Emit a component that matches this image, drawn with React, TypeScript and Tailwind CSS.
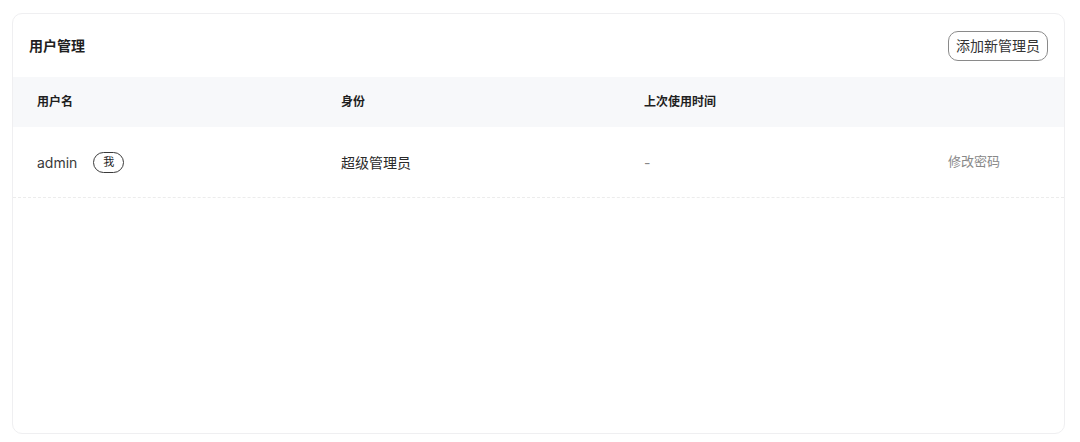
import React from 'react';

interface AdminUser {
  username: string;
  isMe: boolean;
  role: string;
  lastUsed: string;
}

const users: AdminUser[] = [
  { username: 'admin', isMe: true, role: '超级管理员', lastUsed: '-' },
];

const columns = ['用户名', '身份', '上次使用时间', ''];

export default function App() {
  return (
    <div
      className="w-[1080px] h-[442px] bg-white pt-[13px] pl-[12px] pr-[15px] pb-[8px]"
      style={{ fontFamily: 'Inter, "Noto Sans CJK SC", sans-serif' }}
    >
      <div className="h-full rounded-[10px] border border-[#efeff1] bg-white overflow-hidden flex flex-col">
        {/* Header */}
        <div className="h-[63px] flex items-center justify-between pl-[16px] pr-[16px]">
          <h2 className="text-[14px] font-bold text-[#1f1f1f]">用户管理</h2>
          <button className="h-[30px] px-[7px] rounded-[10px] border border-[#8a8a8a] text-[14px] text-[#333] bg-white">
            添加新管理员
          </button>
        </div>

        {/* Table */}
        <div className="grid grid-cols-[304px_303px_304px_1fr] h-[50px] items-center bg-[#f7f8fa]">
          {columns.map((col, i) => (
            <div key={i} className="pl-[24px] text-[12px] font-bold text-[#1f1f1f]">
              {col}
            </div>
          ))}
        </div>

        {users.map((u) => (
          <div
            key={u.username}
            className="grid grid-cols-[304px_303px_304px_1fr] h-[71px] items-center border-b border-dashed border-[#ececec]"
          >
            <div className="pl-[24px] flex items-center gap-[16px]">
              <span className="text-[14px] text-[#3a3a3a]">{u.username}</span>
              {u.isMe && (
                <span className="h-[21px] px-[9px] rounded-full border border-[#3a3a3a] text-[11px] text-[#222] flex items-center">
                  我
                </span>
              )}
            </div>
            <div className="pl-[24px] text-[14px] text-[#2a2a2a]">{u.role}</div>
            <div className="pl-[24px] text-[14px] text-[#888]">{u.lastUsed}</div>
            <div className="pl-[24px] text-[13px] text-[#888]">修改密码</div>
          </div>
        ))}
      </div>
    </div>
  );
}
